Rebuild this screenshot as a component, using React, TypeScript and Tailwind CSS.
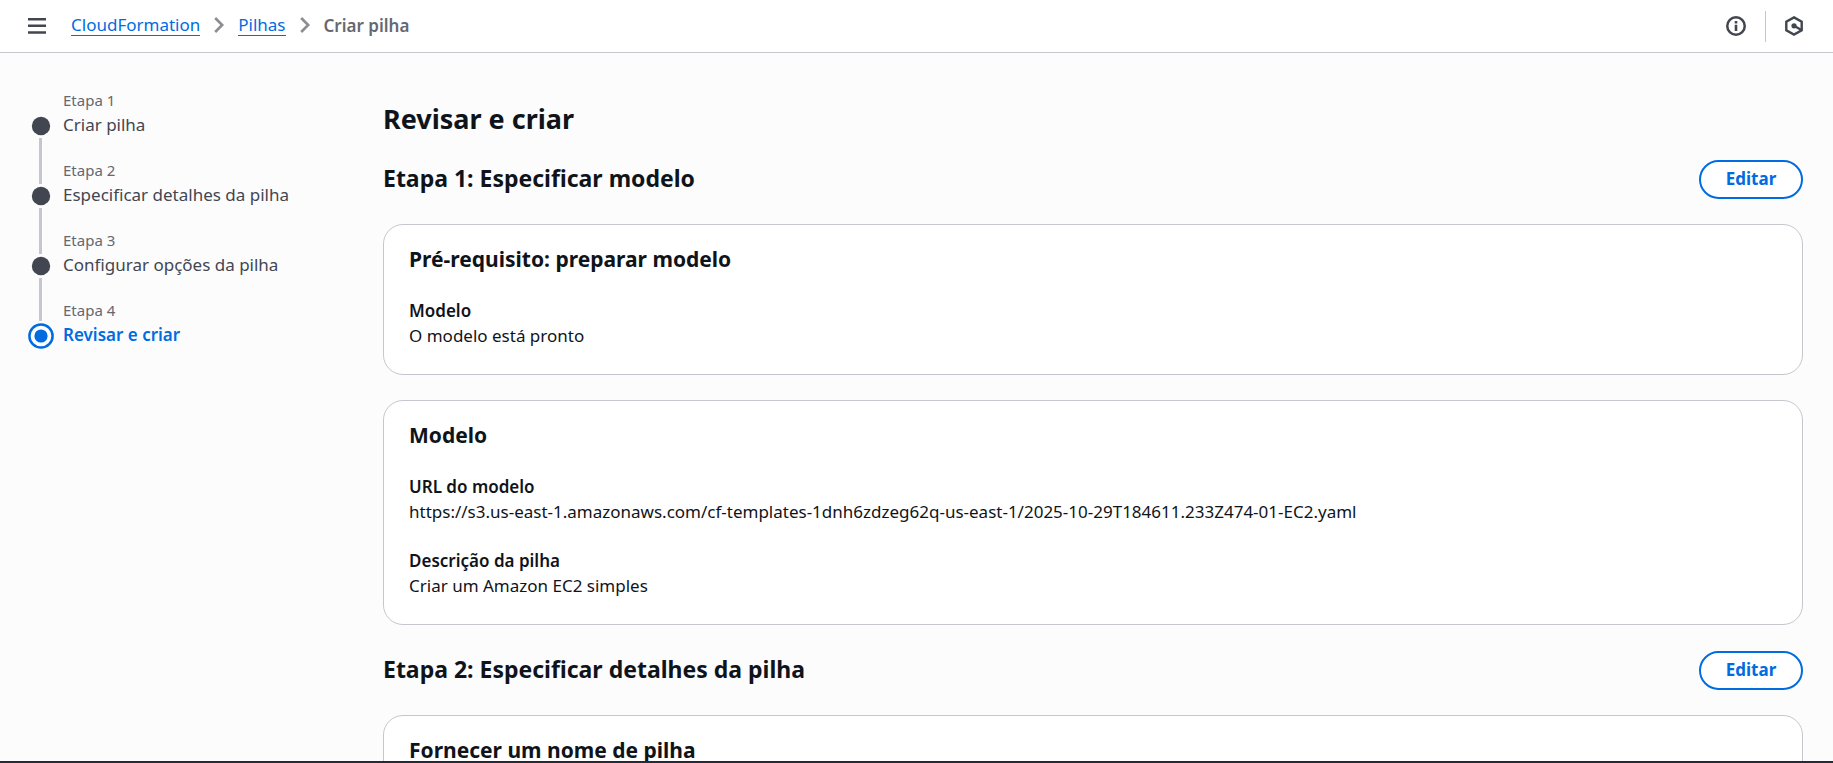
import type { ReactNode } from "react";

const steps = ["Criar pilha", "Especificar detalhes da pilha", "Configurar opções da pilha", "Revisar e criar"];

function Chevron() {
  return (
    <svg className="h-4 w-2.5 shrink-0 text-[#8c8c94]" viewBox="0 0 10 16" fill="none" stroke="currentColor" strokeWidth="2.6" aria-hidden="true">
      <path d="M1.2 1 8.2 8 1.2 15" />
    </svg>
  );
}

function TopBar() {
  return (
    <header className="flex h-[53px] shrink-0 items-center justify-between border-b border-[#c6c6cd] bg-white pr-[29px] pl-7">
      <div className="flex items-center gap-[25px]">
        <button type="button" aria-label="Abrir navegação" className="text-[#424650]">
          <svg className="h-4 w-[18px]" viewBox="0 0 18 16" fill="currentColor" aria-hidden="true">
            <path d="M0 0h18v2.5H0zM0 6.6h18v2.5H0zM0 13.2h18v2.5H0z" />
          </svg>
        </button>
        <nav aria-label="Trilha" className="flex items-center gap-3.5 pb-0.5 text-[17px] leading-[21px]">
          <a href="#cloudformation" className="border-b border-[#006ce0] text-[#006ce0]">CloudFormation</a>
          <Chevron />
          <a href="#pilhas" className="border-b border-[#006ce0] text-[#006ce0]">Pilhas</a>
          <Chevron />
          <span className="font-semibold text-[#656871]">Criar pilha</span>
        </nav>
      </div>
      <div className="flex items-center text-[#424650]">
        <button type="button" aria-label="Informações">
          <svg className="size-5" viewBox="0 0 20 20" fill="none" aria-hidden="true">
            <circle cx="10" cy="10" r="8.75" stroke="currentColor" strokeWidth="2.5" />
            <path d="M8.7 5h2.6v2.4H8.7zM8.7 8.8h2.6V15H8.7z" fill="currentColor" />
          </svg>
        </button>
        <span className="mr-[18px] ml-[19px] h-[31px] w-px bg-[#c6c6cd]" />
        <button type="button" aria-label="Amazon Q">
          <svg className="size-5" viewBox="0 0 20 20" fill="none" stroke="currentColor" strokeWidth="2.4" aria-hidden="true">
            <path d="M10 1.4 17.7 5.7v8.6L10 18.6 2.3 14.3V5.7z" />
            <path d="M10 9.8 17.4 14" strokeWidth="2.4" />
            <circle cx="10" cy="9.8" r="2.6" fill="currentColor" stroke="none" />
          </svg>
        </button>
      </div>
    </header>
  );
}

function Marker({ current }: { current: boolean }) {
  if (current) {
    return (
      <svg className="size-[26px] shrink-0" viewBox="0 0 26 26" fill="none" aria-hidden="true">
        <circle cx="13" cy="13" r="11.6" stroke="#006ce0" strokeWidth="2.5" fill="#fff" />
        <circle cx="13" cy="13" r="6.6" fill="#006ce0" />
      </svg>
    );
  }
  return (
    <svg className="size-5 shrink-0" viewBox="0 0 20 20" aria-hidden="true">
      <circle cx="10" cy="10" r="9.2" fill="#424650" />
    </svg>
  );
}

function Steps() {
  return (
    <nav aria-label="Etapas" className="w-[383px] shrink-0 pt-[38px] pl-[27px]">
      <ol>
        {steps.map((label, i) => {
          const current = i === steps.length - 1;
          return (
            <li key={label} className="flex h-[70px] gap-[9px]">
              <div className="flex w-[27px] flex-col items-center gap-0.5">
                <span className={current ? "h-5 w-[3px] bg-[#c6c6cd]" : i > 0 ? "h-[23px] w-[3px] bg-[#c6c6cd]" : "h-[23px] w-[3px]"} />
                <Marker current={current} />
                {!current && <span className="w-[3px] grow bg-[#c6c6cd]" />}
              </div>
              <div>
                <div className="text-[15px] leading-[18px] text-[#656871]">Etapa {i + 1}</div>
                <a
                  href={`#etapa-${i + 1}`}
                  aria-current={current ? "step" : undefined}
                  className={current ? "block pt-1 text-[17px] leading-6 font-semibold text-[#006ce0]" : "block pt-1 text-[17px] leading-6 text-[#424650]"}
                >
                  {label}
                </a>
              </div>
            </li>
          );
        })}
      </ol>
    </nav>
  );
}

function SectionHeader({ title }: { title: string }) {
  return (
    <div className="flex h-10 items-center justify-between">
      <h2 className="pb-0.5 text-[23px] leading-[30px] font-bold">{title}</h2>
      <button type="button" className="h-[39px] w-[104px] rounded-full border-2 border-[#006ce0] bg-white text-[17px] leading-6 font-bold text-[#006ce0]">
        Editar
      </button>
    </div>
  );
}

function Card({ title, children }: { title: string; children?: ReactNode }) {
  return (
    <section className="rounded-[20px] border border-[#c6c6cd] bg-white px-[25px] pt-[19px] pb-[26px]">
      <h3 className="text-[21px] leading-[30px] font-bold">{title}</h3>
      <dl className="mt-6 flex flex-col gap-6">{children}</dl>
    </section>
  );
}

function Field({ label, value }: { label: string; value: string }) {
  return (
    <div className="text-[17px] leading-[25px]">
      <dt className="font-semibold">{label}</dt>
      <dd>{value}</dd>
    </div>
  );
}

export default function App() {
  return (
    <div className="flex h-screen flex-col overflow-hidden border-b-2 border-[#232b37] bg-[#fcfcfd] font-['Noto_Sans',sans-serif] text-[#0f141a]">
      <TopBar />
      <div className="flex min-h-0 grow">
        <Steps />
        <main className="min-w-0 grow overflow-hidden pt-12 pr-[30px]">
          <h1 className="text-[27px] leading-[36px] font-bold">Revisar e criar</h1>
          <div className="mt-[22px] flex flex-col gap-[25px]">
            <SectionHeader title="Etapa 1: Especificar modelo" />
            <Card title="Pré-requisito: preparar modelo">
              <Field label="Modelo" value="O modelo está pronto" />
            </Card>
            <Card title="Modelo">
              <Field label="URL do modelo" value="https://s3.us-east-1.amazonaws.com/cf-templates-1dnh6zdzeg62q-us-east-1/2025-10-29T184611.233Z474-01-EC2.yaml" />
              <Field label="Descrição da pilha" value="Criar um Amazon EC2 simples" />
            </Card>
            <SectionHeader title="Etapa 2: Especificar detalhes da pilha" />
            <Card title="Fornecer um nome de pilha" />
          </div>
        </main>
      </div>
    </div>
  );
}
